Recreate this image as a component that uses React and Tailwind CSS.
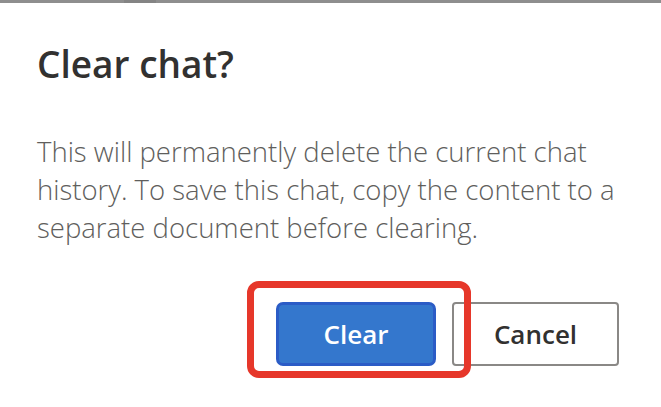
import React from "react";

const App = () => {
  return (
    <div
      className="relative h-[407px] w-[661px] overflow-hidden bg-white"
      style={{ fontFamily: '"Open Sans", "Noto Sans", sans-serif' }}
    >
      {/* top edge of the window behind the dialog */}
      <div className="flex h-[3px] bg-[#8e8e8e]">
        <div className="ml-[124px] w-[32px] bg-[#848484]" />
      </div>

      <div className="px-[37px] pt-[37px]">
        <h1 className="text-[37px] leading-[48px] font-semibold text-[#323130]">
          Clear chat?
        </h1>
        <p className="mt-[45px] w-[590px] text-[27.5px] leading-[38px] font-light text-[#605e5c]">
          This will permanently delete the current chat history. To save this
          chat, copy the content to a separate document before clearing.
        </p>

        <div className="mt-[55px] flex justify-end gap-4 pr-[5px]">
          <div className="relative">
            <button className="h-[64px] w-[160px] rounded-[7px] border-[3px] border-[#2b5cc6] bg-[#3477cd] text-[26px] font-semibold text-white">
              Clear
            </button>
            {/* highlight annotation */}
            <div className="pointer-events-none absolute -top-[21px] -bottom-[12px] -left-[29px] -right-[35px] rounded-[12px] border-[7px] border-[#e6372a]" />
          </div>
          <button className="h-[64px] w-[167px] rounded-[4px] border-2 border-[#8a8886] bg-white text-[26px] font-semibold text-[#323130]">
            Cancel
          </button>
        </div>
      </div>
    </div>
  );
};

export default App;
